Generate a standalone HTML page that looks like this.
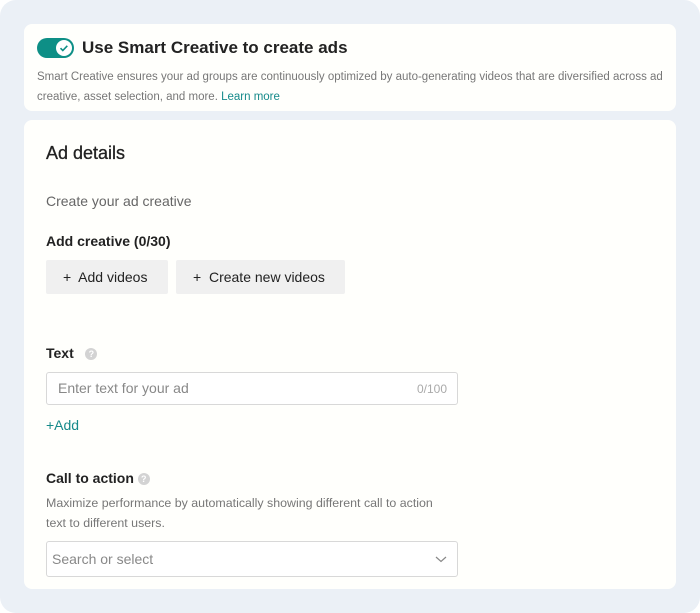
<!DOCTYPE html>
<html><head><style>
*{margin:0;padding:0;box-sizing:border-box}
html,body{width:700px;height:613px;background:#fff;font-family:"Liberation Sans",sans-serif;overflow:hidden}
.outer{position:absolute;left:0;top:0;width:700px;height:613px;background:#ebf0f6;border-radius:16px}
.card{position:absolute;left:24px;width:652px;background:#fffffc;border-radius:8px}
.abs{position:absolute;white-space:nowrap}
.btn{position:absolute;top:260px;height:34px;background:#f0f0f0;border-radius:2px;font-size:14px;color:#222;line-height:34px;padding-left:17px}
.input{position:absolute;left:22px;width:412px;border:1px solid #d8d8d8;border-radius:3px;background:#fff}
.q{display:inline-block;width:12px;height:12px;border-radius:50%;background:#d3d3d3;color:#fff;font-size:9px;text-align:center;line-height:12px;vertical-align:1px}
</style></head><body>
<div class="outer"></div>
<div class="card" style="top:24px;height:87px">
  <div class="abs" style="left:13px;top:14px;width:37px;height:20px;background:#0e8f86;border-radius:10px">
    <div style="position:absolute;right:2px;top:2px;width:16px;height:16px;border-radius:50%;background:#fff">
      <svg width="16" height="16" viewBox="0 0 16 16"><path d="M4.5 8.2l2.3 2.3 4.5-4.7" stroke="#0e8f86" stroke-width="1.6" fill="none"/></svg>
    </div>
  </div>
  <div class="abs" style="left:58px;top:14px;font-size:17px;font-weight:bold;color:#222">Use Smart Creative to create ads</div>
  <div class="abs" style="left:13px;top:43px;font-size:11.5px;color:#777;line-height:20px;white-space:normal;width:635px">Smart Creative ensures your ad groups are continuously optimized by auto-generating videos that are diversified across ad creative, asset selection, and more. <span style="color:#168a8a">Learn more</span></div>
</div>
<div class="card" style="top:120px;height:469px"></div>
<div style="position:absolute;left:24px;top:0;width:652px;height:613px">
  <div class="abs" style="left:22px;top:143px;font-size:18px;color:#222;-webkit-text-stroke:0.3px #222">Ad details</div>
  <div class="abs" style="left:22px;top:193px;font-size:14px;color:#666">Create your ad creative</div>
  <div class="abs" style="left:22px;top:233px;font-size:14px;font-weight:bold;color:#222">Add creative (0/30)</div>
  <div class="btn" style="left:22px;width:122px">+&nbsp; Add videos</div>
  <div class="btn" style="left:152px;width:169px">+&nbsp; Create new videos</div>
  <div class="abs" style="left:22px;top:345px;font-size:14px;font-weight:bold;color:#222">Text &nbsp;&nbsp;<span class="q">?</span></div>
  <div class="input" style="top:372px;height:33px"><span class="abs" style="left:11px;top:7px;font-size:14px;color:#888">Enter text for your ad</span><span class="abs" style="right:10px;top:9px;font-size:12px;color:#aaa">0/100</span></div>
  <div class="abs" style="left:22px;top:417px;font-size:14px;color:#168a8a">+Add</div>
  <div class="abs" style="left:22px;top:470px;font-size:14px;font-weight:bold;color:#222">Call to action <span class="q">?</span></div>
  <div class="abs" style="left:22px;top:493px;font-size:12.4px;color:#777;line-height:20px">Maximize performance by automatically showing different call to action<br>text to different users.</div>
  <div class="input" style="top:541px;height:36px"><span class="abs" style="left:5px;top:9px;font-size:14px;color:#888">Search or select</span>
    <svg class="abs" style="right:10px;top:12px" width="12" height="10" viewBox="0 0 12 10"><path d="M1 3l5 4.5L11 3" stroke="#888" stroke-width="1.2" fill="none"/></svg></div>
</div>
</body></html>
